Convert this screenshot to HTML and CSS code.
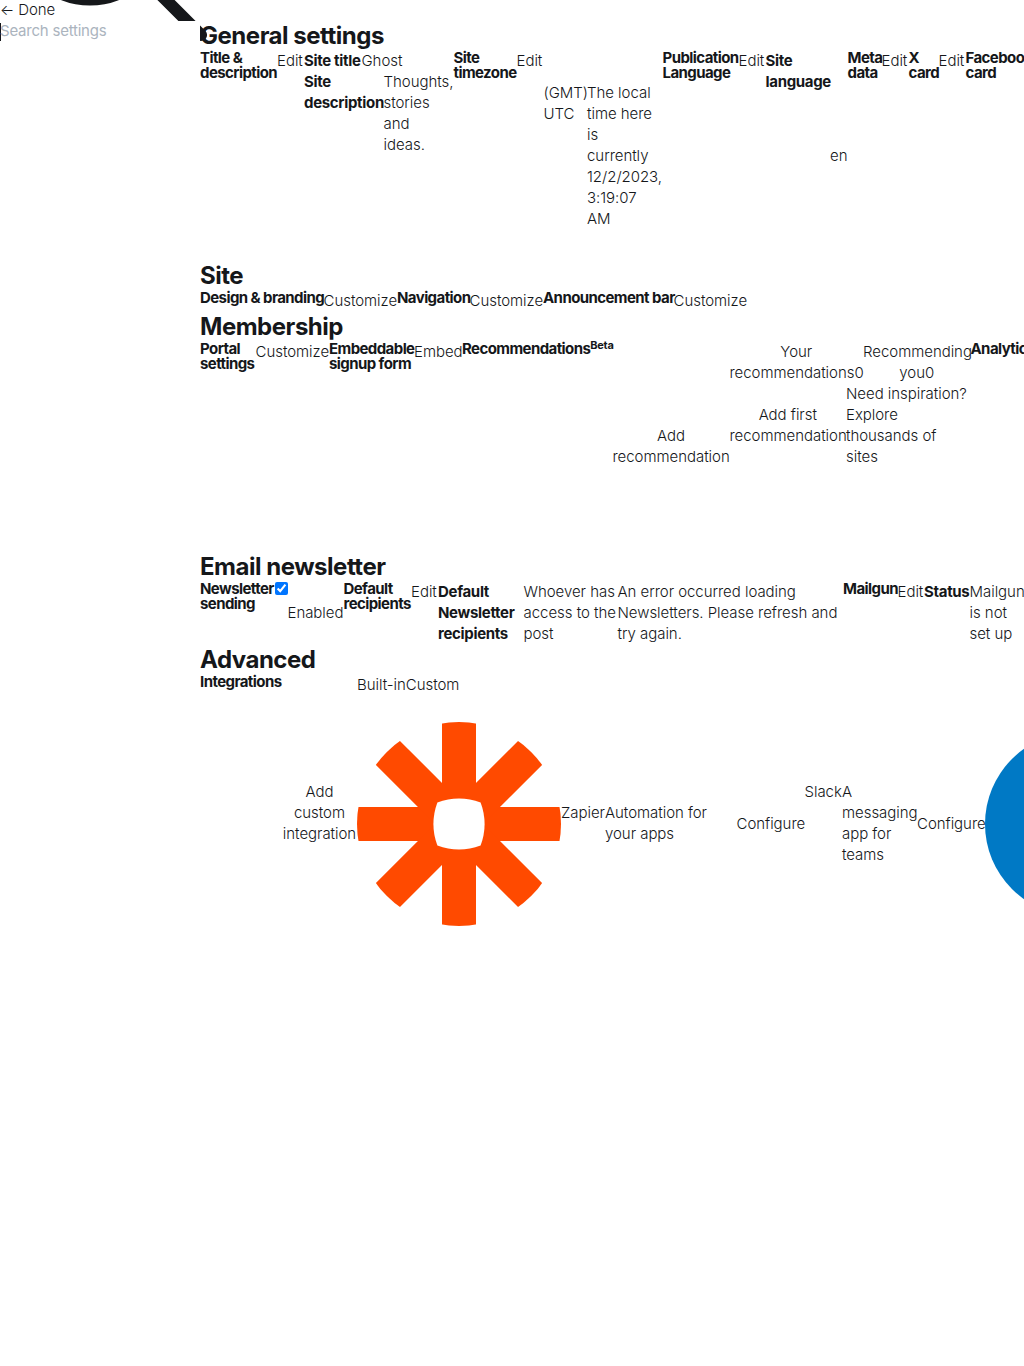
FILE: index.html
```html
<!DOCTYPE html>
<html lang="en">
<head>
<meta charset="utf-8">
<title>Settings</title>
<link rel="stylesheet" href="styles.css">
</head>
<body>
<div class="app">
<svg class="search-icon" width="210" height="45" viewBox="0 0 210 45"><circle cx="90" cy="-72" r="71.5"/><path d="M153 -13L201 35"/></svg>
<aside class="sidebar">
<div class="done">← Done</div>
<label class="search"><input type="text" placeholder="Search settings" aria-label="Search settings"></label>
</aside>
<main class="main">
<section>
<h2>General settings</h2>
<div class="row general">
<h5>Title &amp;<br>description</h5><span>Edit</span>
<div class="pairs"><b>Site title</b><span>Ghost</span><b>Site<br>description</b><span class="third">Thoughts,<br>stories<br>and<br>ideas.</span></div>
<h5>Site<br>timezone</h5><span>Edit</span>
<div class="drop1">(GMT)<br>UTC</div><div class="drop1">The local<br>time here<br>is<br>currently<br>12/2/2023,<br>3:19:07<br>AM</div>
<h5>Publication<br>Language</h5><span>Edit</span><b>Site<br>language</b><div class="drop2">en</div>
<h5>Meta<br>data</h5><span>Edit</span><h5>X<br>card</h5><span>Edit</span><h5>Facebook<br>card</h5>
</div>
</section>
<section>
<h2>Site</h2>
<div class="row site"><h5>Design &amp; branding</h5><span>Customize</span><h5>Navigation</h5><span>Customize</span><h5>Announcement bar</h5><span>Customize</span></div>
</section>
<section>
<h2>Membership</h2>
<div class="row membership">
<h5>Portal<br>settings</h5><span>Customize</span><h5>Embeddable<br>signup form</h5><span>Embed</span><h5>Recommendations<sup>Beta</sup></h5>
<div class="add center">Add<br>recommendation</div>
<div class="recs">
<div class="tabs"><span class="center">Your<br>recommendations0</span><span class="center">Recommending<br>you0</span></div>
<div class="empty"><span class="center first">Add first<br>recommendation</span><span>Need inspiration?<br>Explore<br>thousands of<br>sites</span></div>
</div>
<h5>Analytics</h5>
</div>
</section>
<section>
<h2>Email newsletter</h2>
<div class="row email">
<h5>Newsletter<br>sending</h5><input class="check" type="checkbox" checked aria-label="Enabled"><span><br>Enabled</span>
<h5>Default<br>recipients</h5><span>Edit</span><b>Default<br>Newsletter<br>recipients</b><span>Whoever has<br>access to the<br>post</span><span>An error occurred loading<br>Newsletters. Please refresh and<br>try again.</span>
<h5>Mailgun</h5><span>Edit</span><b>Status</b><span>Mailgun<br>is not<br>set up</span>
</div>
</section>
<section>
<h2>Advanced</h2>
<div class="row advanced">
<h5>Integrations</h5>
<div class="custom center">Add<br>custom<br>integration</div>
<div class="panel">
<div class="modes"><span>Built-in</span><span>Custom</span></div>
<div class="apps">
<svg class="zapier" width="204" height="204" viewBox="-102 -102 204 204"><defs><clipPath id="disc"><circle r="102"/></clipPath></defs><g clip-path="url(#disc)"><path class="orange" d="M-17-104H17V104H-17zM-104-17H104V17H-104z"/><path class="orange" transform="rotate(45)" d="M-17-104H17V104H-17zM-104-17H104V17H-104z"/></g><path class="hole" d="M-21.6-21.6Q-11-25.6 0-25.6T21.6-21.6Q25.6-11 25.6 0T21.6 21.6Q11 25.6 0 25.6T-21.6 21.6Q-25.6 11-25.6 0T-21.6-21.6Z"/></svg>
<span class="zap-name">Zapier</span><span>Automation for<br>your apps</span><span>Configure</span>
<span class="slack">Slack</span><span>A<br>messaging<br>app for<br>teams</span><span>Configure</span>
<svg class="blue" width="184" height="184" viewBox="0 0 184 184"><circle cx="92" cy="92" r="92"/></svg>
</div>
</div>
</div>
</section>
</main>
</div>
</body>
</html>
```
FILE: styles.css
```css
* { box-sizing: border-box; margin: 0; padding: 0; }
body { background: #fff; color: #15171a; font: 300 15px/21px Inter, sans-serif; letter-spacing: -.04px; overflow: hidden; }
.app { display: flex; height: 1366px; position: relative; overflow: hidden; white-space: nowrap; }
.search-icon { position: absolute; left: 0; top: 0; fill: none; stroke: #15171a; stroke-width: 12.2; stroke-linecap: round; }
.sidebar { width: 200px; flex: none; position: relative; }
.done { height: 21px; line-height: 19px; letter-spacing: -.1px; }
.search { display: block; height: 21px; background: linear-gradient(#15171a, #15171a) 0 2px / 1px 18px no-repeat #fff; }
.search input { display: block; width: 199px; height: 19px; border: 0; outline: 0; background: transparent; font: 400 15px/19px Inter, sans-serif; letter-spacing: -.22px; }
.search input::placeholder { color: #abb4be; opacity: 1; }
.main { width: 824px; flex: none; padding-top: 21px; overflow: hidden; position: relative; }
h2 { font-size: 24px; line-height: 30px; font-weight: 700; letter-spacing: -.48px; }
h5 { font-size: 15px; line-height: 15px; font-weight: 700; letter-spacing: -.58px; }
b { font-weight: 700; letter-spacing: -.32px; }
sup { font-size: 11px; line-height: 0; vertical-align: 5px; letter-spacing: -.25px; }
.row { display: grid; align-items: start; justify-content: start; margin-top: -1px; padding-bottom: 1px; }
.center { text-align: center; }
.general { height: 211px; grid-template-columns: 77px 27px 149.5px 63px 27px 43.5px 75.5px 76px 27px 64.5px 17.5px 34px 27px 30px 27px 80px; }
.pairs { display: grid; grid-template-columns: 57.5px 22px 70px; }
.pairs > :nth-child(2) { grid-column: 2 / 4; }
.pairs > :nth-child(3) { grid-column: 1 / 3; }
.drop1 { padding-top: 32px; }
.drop2 { padding-top: 95px; }
.site { height: 22px; grid-template-columns: 123.5px 73.5px 72.5px 73.5px 130.5px 74px; }
.membership { height: 211px; grid-template-columns: 55.5px 73.5px 85px 48px 150.5px 117px 241px 80px; }
.add { padding-top: 84px; }
.tabs { display: grid; grid-template-columns: 133.5px 107.5px; }
.empty { display: grid; grid-template-columns: 116.5px 124px; }
.first { padding-top: 21px; }
.email { height: 64px; grid-template-columns: 75px 12.5px 56px 67.5px 27px 85.5px 94px 225.5px 54.5px 26.5px 45.5px 60px; }
.check { width: 13px; height: 13px; margin-top: 1px; }
.advanced { grid-template-columns: 82px 75px 900px; }
.custom { padding-top: 107px; }
.modes { display: flex; height: 48px; }
.apps { display: grid; align-items: center; grid-template-columns: 204px 44px 131.5px 68px 37.5px 75px 68px 184px; }
.apps span { padding-bottom: 2px; }
.zapier, .blue { display: block; }
.orange { fill: #ff4a00; }
.hole { fill: #fff; }
.blue { fill: #0079c5; }
.apps .zap-name { padding-bottom: 23px; }
.apps .slack { padding-bottom: 65px; }
```
